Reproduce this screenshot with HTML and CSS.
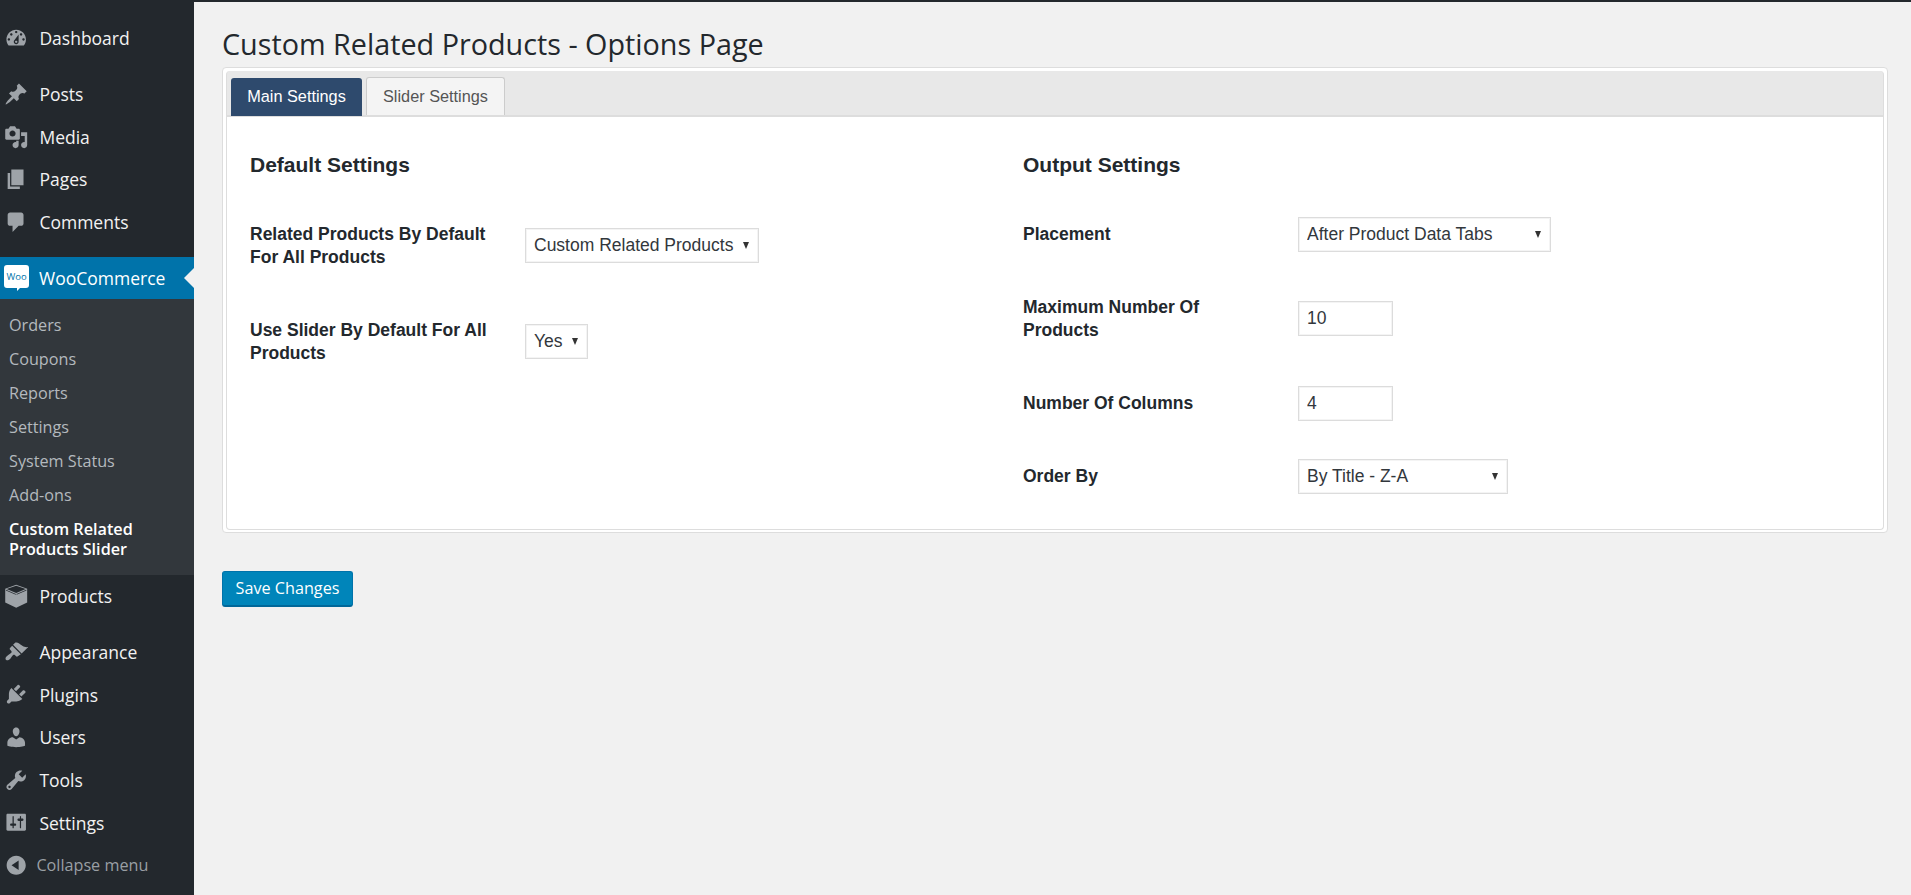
FILE: index.html
```html
<!DOCTYPE html>
<html lang="en">
<head>
<meta charset="utf-8">
<title>Custom Related Products - Options Page</title>
<link rel="stylesheet" href="styles.css">
</head>
<body>
<div class="layout">
  <nav class="sidebar">
    <ul class="menu">
      <li class="item gap-after"><svg class="ico" viewBox="0 0 20 20"><path fill-rule="evenodd" d="M3.76 16h12.48c1.1-1.37 1.76-3.11 1.76-5 0-4.42-3.58-8-8-8s-8 3.58-8 8c0 1.89.66 3.63 1.76 5zM10 4c.55 0 1 .45 1 1s-.45 1-1 1-1-.45-1-1 .45-1 1-1zM6 6c.55 0 1 .45 1 1s-.45 1-1 1-1-.45-1-1 .45-1 1-1zm8 0c.55 0 1 .45 1 1s-.45 1-1 1-1-.45-1-1 .45-1 1-1zm-5.37 5.55L12 7v6c0 1.1-.9 2-2 2s-2-.9-2-2c0-.57.24-1.08.63-1.45zM4 10c.55 0 1 .45 1 1s-.45 1-1 1-1-.45-1-1 .45-1 1-1zm12 0c.55 0 1 .45 1 1s-.45 1-1 1-1-.45-1-1 .45-1 1-1zm-5 3c0-.55-.45-1-1-1s-1 .45-1 1 .45 1 1 1 1-.45 1-1z"/></svg><span>Dashboard</span></li>
      <li class="item"><svg class="ico" viewBox="0 0 20 20"><path d="M10.44 3.02l1.82-1.82 6.36 6.35-1.83 1.82c-1.05-.68-2.48-.57-3.41.36l-.75.75c-.92.93-1.04 2.35-.35 3.41l-1.83 1.82-2.41-2.41-2.8 2.79c-.42.42-3.38 2.71-3.8 2.29s1.86-3.39 2.28-3.81l2.79-2.79L4.1 9.36l1.83-1.82c1.05.69 2.48.57 3.4-.36l.75-.75c.93-.92 1.05-2.35.36-3.41z"/></svg><span>Posts</span></li>
      <li class="item"><svg class="ico" viewBox="0 0 20 20"><path fill-rule="evenodd" d="M13 11V4c0-.55-.45-1-1-1h-1.67L9 1H5L3.67 3H2c-.55 0-1 .45-1 1v7c0 .55.45 1 1 1h10c.55 0 1-.45 1-1zM7 4.5c1.38 0 2.5 1.12 2.5 2.5S8.38 9.5 7 9.5 4.5 8.38 4.5 7 5.62 4.5 7 4.5zM14 6h5v10.5c0 1.38-1.12 2.5-2.5 2.5S14 17.88 14 16.5s1.12-2.5 2.5-2.5c.17 0 .34.02.5.05V9h-3V6zm-4 8.05V13h2v3.5c0 1.38-1.12 2.5-2.5 2.5S7 17.88 7 16.5 8.12 14 9.5 14c.17 0 .34.02.5.05z"/></svg><span>Media</span></li>
      <li class="item"><svg class="ico" viewBox="0 0 20 20"><path d="M6 15V2h10v13H6zm-1 1h8v2H3V5h2v11z"/></svg><span>Pages</span></li>
      <li class="item gap-after"><svg class="ico" viewBox="0 0 20 20"><path d="M5 2h9c1.1 0 2 .9 2 2v7c0 1.1-.9 2-2 2h-2l-5 5v-5H5c-1.1 0-2-.9-2-2V4c0-1.1.9-2 2-2z"/></svg><span>Comments</span></li>
      <li class="item active">
        <svg class="woo" viewBox="0 0 25 26"><path d="M3 0h19a3 3 0 0 1 3 3v17a3 3 0 0 1-3 3h-6l-3 3v-3H3a3 3 0 0 1-3-3V3a3 3 0 0 1 3-3z"/><text class="woo-text" x="12.5" y="15" text-anchor="middle">Woo</text></svg>
        <span>WooCommerce</span>
      </li>
      <li>
        <ul class="submenu">
          <li class="subitem">Orders</li>
          <li class="subitem">Coupons</li>
          <li class="subitem">Reports</li>
          <li class="subitem">Settings</li>
          <li class="subitem">System Status</li>
          <li class="subitem">Add-ons</li>
          <li class="subitem current">Custom Related Products Slider</li>
        </ul>
      </li>
      <li class="item gap-after"><svg class="ico" viewBox="0 0 20 20"><path fill-rule="evenodd" d="M10 .6l9 3.3v11.3l-9 4.2-9-4.2V3.9zM10 1.5L2.2 4.2 10 7.4l7.8-3.2zM1.6 4.8l8.1 3.4v.6L1.6 5.4zM18.4 4.8l-8.1 3.4v.6l8.1-3.4z"/></svg><span>Products</span></li>
      <li class="item"><svg class="ico" viewBox="0 0 20 20"><path d="M14.48 11.06L7.41 3.99l1.5-1.5c.5-.56 2.3-.47 3.51.32 1.21.8 1.43 1.28 2.91 2.1 1.18.64 2.45 1.26 4.45.85zm-.71.71L6.7 4.7 4.93 6.47c-.39.39-.39 1.02 0 1.41l1.06 1.06c.39.39.39 1.03 0 1.42-.6.6-1.43 1.11-2.21 1.69-.35.26-.7.53-1.01.84C1.43 13.71.96 15.12 1.4 15.91c.1.2.28.38.48.48.79.44 2.2-.03 3.02-.85.31-.31.58-.66.84-1.01.58-.78 1.09-1.61 1.69-2.21.39-.39 1.03-.39 1.42 0l1.06 1.06c.39.39 1.02.39 1.41 0z"/></svg><span>Appearance</span></li>
      <li class="item"><svg class="ico" viewBox="0 0 20 20"><path d="M13.11 4.36L9.87 7.6 8 5.73l3.24-3.24c.35-.34 1.05-.2 1.56.32.52.51.66 1.21.31 1.55zm-8 1.77l.91-1.12 9.01 9.01-1.19.84c-.71.71-2.63 1.16-3.82 1.16H6.14L4.9 17.26c-.59.59-1.54.59-2.12 0-.59-.58-.59-1.53 0-2.12l1.24-1.24v-3.88c0-1.13.4-3.19 1.09-3.89zm7.26 3.97l3.24-3.24c.34-.35 1.04-.21 1.55.31.52.51.66 1.21.31 1.55l-3.24 3.25z"/></svg><span>Plugins</span></li>
      <li class="item"><svg class="ico" viewBox="0 0 20 20"><path d="M10 9.25c-2.27 0-2.73-3.44-2.73-3.44C7 4.02 7.82 2 9.97 2c2.16 0 2.98 2.02 2.71 3.81 0 0-.41 3.44-2.68 3.44zm0 2.57L12.72 10c2.39 0 4.52 2.33 4.52 4.53v2.49s-3.65 1.13-7.24 1.13c-3.65 0-7.24-1.13-7.24-1.13v-2.49c0-2.25 1.94-4.48 4.47-4.48z"/></svg><span>Users</span></li>
      <li class="item"><svg class="ico" viewBox="0 0 20 20"><path fill-rule="evenodd" d="M16.68 9.77c-1.34 1.34-3.3 1.67-4.95.99l-5.41 6.52c-.99.99-2.59.99-3.58 0s-.99-2.59 0-3.57l6.52-5.42c-.68-1.65-.35-3.61.99-4.95 1.28-1.28 3.12-1.62 4.72-1.06l-2.89 2.89 2.82 2.82 2.86-2.87c.53 1.58.18 3.39-1.08 4.65zM3.81 16.21c.4.39 1.04.39 1.43 0 .4-.4.4-1.04 0-1.43-.39-.4-1.03-.4-1.43 0-.39.39-.39 1.03 0 1.43z"/></svg><span>Tools</span></li>
      <li class="item"><svg class="ico" viewBox="0 0 20 20"><path fill-rule="evenodd" d="M18 16V4c0-.55-.45-1-1-1H3c-.55 0-1 .45-1 1v12c0 .55.45 1 1 1h14c.55 0 1-.45 1-1zM8 11h1c.55 0 1 .45 1 1s-.45 1-1 1H8v1.5c0 .28-.22.5-.5.5s-.5-.22-.5-.5V13H6c-.55 0-1-.45-1-1s.45-1 1-1h1V5.5c0-.28.22-.5.5-.5s.5.22.5.5V11zm5-2h-1c-.55 0-1-.45-1-1s.45-1 1-1h1V5.5c0-.28.22-.5.5-.5s.5.22.5.5V7h1c.55 0 1 .45 1 1s-.45 1-1 1h-1v5.5c0 .28-.22.5-.5.5s-.5-.22-.5-.5V9z"/></svg><span>Settings</span></li>
      <li class="item collapse"><svg class="ico" viewBox="0 0 20 20"><path fill-rule="evenodd" d="M10 2.16c4.33 0 7.84 3.51 7.84 7.84s-3.51 7.84-7.84 7.84S2.16 14.33 2.16 10 5.71 2.16 10 2.16zm2 11.72V6.12L6.18 9.97z"/></svg><span>Collapse menu</span></li>
    </ul>
  </nav>
  <main class="main">
    <h1 class="title">Custom Related Products - Options Page</h1>
    <section class="panel">
      <div class="tabs">
        <a class="tab tab-on">Main Settings</a>
        <a class="tab tab-off">Slider Settings</a>
      </div>
      <div class="content">
        <div class="column">
          <h3 class="heading">Default Settings</h3>
          <div class="row row-a">
            <label class="label">Related Products By Default For All Products</label>
            <div class="select-wrap w-custom"><select class="control"><option>Custom Related Products</option></select></div>
          </div>
          <div class="row row-a">
            <label class="label">Use Slider By Default For All Products</label>
            <div class="select-wrap w-yes"><select class="control"><option>Yes</option></select></div>
          </div>
        </div>
        <div class="column">
          <h3 class="heading">Output Settings</h3>
          <div class="row row-b">
            <label class="label">Placement</label>
            <div class="select-wrap w-place"><select class="control"><option>After Product Data Tabs</option></select></div>
          </div>
          <div class="row row-c">
            <label class="label">Maximum Number Of Products</label>
            <input class="control w-num" type="text" value="10">
          </div>
          <div class="row row-b row-shift">
            <label class="label">Number Of Columns</label>
            <input class="control w-num" type="text" value="4">
          </div>
          <div class="row row-d">
            <label class="label">Order By</label>
            <div class="select-wrap w-order"><select class="control"><option>By Title - Z-A</option></select></div>
          </div>
        </div>
      </div>
    </section>
    <button class="save" type="button">Save Changes</button>
  </main>
</div>
</body>
</html>
```
FILE: styles.css
```css
* { box-sizing: border-box; }
html, body { margin: 0; height: 100%; }
body {
  background: #f1f1f1;
  font-family: "Open Sans", sans-serif;
  overflow: hidden;
}
ul { list-style: none; margin: 0; padding: 0; }
.layout { display: flex; height: 895px; border-top: 2px solid #23282d; }
.sidebar { width: 194px; flex: none; background: #23282d; padding-top: 14.8px; }
.item {
  position: relative;
  height: 42.65px;
  display: flex;
  align-items: center;
  padding-left: 4px;
  font-size: 17.5px;
  color: #f2f2f2;
}
.item span { margin-left: 11px; }
.gap-after { margin-bottom: 13.3px; }
.ico { width: 24.4px; height: 24.4px; flex: none; fill: #9ea3a8; }
.active { background: #0073aa; color: #fff; padding-left: 4px; }
.active span { margin-left: 10px; }
.active::after {
  content: "";
  position: absolute;
  right: 0;
  top: 50%;
  margin-top: -10px;
  border: 10px solid transparent;
  border-left-width: 0;
  border-right-color: #f1f1f1;
}
.woo { width: 25px; height: 26px; flex: none; fill: #fff; }
.woo-text { font-family: "Open Sans", sans-serif; font-size: 9.5px; fill: #0073aa; }
.submenu { background: #32373c; padding: 9px 0 8.3px; }
.subitem {
  padding: 7.3px 12px 7.3px 9px;
  font-size: 16.2px;
  line-height: 19.5px;
  color: #b4b9be;
}
.current { color: #fff; font-weight: 600; }
.collapse { font-size: 16.2px; color: #9a9fa4; }
.collapse span { margin-left: 8px; }
.main { flex: 1; min-width: 0; padding: 0 23px 0 28px; }
.title {
  margin: 0;
  padding-top: 23px;
  height: 65px;
  font-size: 28.75px;
  line-height: 38px;
  font-weight: 400;
  color: #23282d;
}
.panel {
  background: #fff;
  border: 1px solid #ddd;
  border-radius: 4px;
  padding: 3px;
  height: 466px;
}
.tabs {
  display: flex;
  align-items: flex-end;
  gap: 4px;
  height: 46px;
  padding: 0 0 0 4px;
  background: #e8e8e8;
  border: 1px solid #ddd;
  border-width: 0 1px 2px 1px;
  border-radius: 4px 4px 0 0;
}
.tab {
  display: flex;
  align-items: center;
  justify-content: center;
  height: 38px;
  font-family: "Liberation Sans", Arial, sans-serif;
  font-size: 16.3px;
  border-radius: 3px 3px 0 0;
}
.tab-on { width: 131px; padding-bottom: 2px; background: #2e4a6d; color: #fff; margin-bottom: -1px; }
.tab-off { width: 139px; height: 38px; background: #f4f4f4; color: #555; border: 1px solid #ccc; border-bottom: 0; }
.content {
  display: grid;
  grid-template-columns: 773px 1fr;
  padding: 0 0 0 23px;
  height: 413px;
  border: 1px solid #ddd;
  border-top: 0;
  border-radius: 0 0 4px 4px;
  font-family: "Liberation Sans", Arial, sans-serif;
  color: #23282d;
}
.heading {
  margin: 0;
  height: 80px;
  padding-top: 36px;
  font-size: 21px;
  line-height: 24px;
  font-weight: 700;
}
.row {
  display: grid;
  grid-template-columns: 275px 1fr;
  align-items: center;
  justify-items: start;
}
.row-a { height: 96px; }
.row-a .label { padding-top: 2px; }
.row-b { height: 75px; }
.row-c { height: 93px; }
.row-d { height: 73px; }
.row-shift { margin-top: 1px; margin-bottom: -1px; }
.label { font-size: 17.5px; line-height: 23px; font-weight: 700; padding-right: 20px; }
.control {
  display: block;
  width: 100%;
  height: 35px;
  padding: 0 8px;
  margin: 0;
  background: #fff;
  border: 1px solid #dcdcdc;
  box-shadow: inset 0 0 0 1px #f4f4f4;
  border-radius: 0;
  font-family: inherit;
  font-size: 17.5px;
  color: #32373c;
  appearance: none;
  outline: none;
}
select.control { padding-bottom: 1px; }
.select-wrap { position: relative; }
.select-wrap::after {
  content: "";
  position: absolute;
  right: 10px;
  top: 14px;
  border: 3.5px solid transparent;
  border-top: 7px solid #333;
  border-bottom: 0;
}
.w-custom { width: 234px; }
.w-yes { width: 63px; }
.w-place { width: 253px; }
.w-order { width: 210px; }
.w-num { width: 95px; }
.save {
  display: block;
  margin-top: 38px;
  width: 131px;
  height: 36px;
  padding: 0 0 1px;
  background: #0085ba;
  border: 1px solid #0073aa;
  border-bottom: 2px solid #006799;
  border-radius: 3px;
  color: #fff;
  font-family: "Open Sans", sans-serif;
  font-size: 16.2px;
}
```
